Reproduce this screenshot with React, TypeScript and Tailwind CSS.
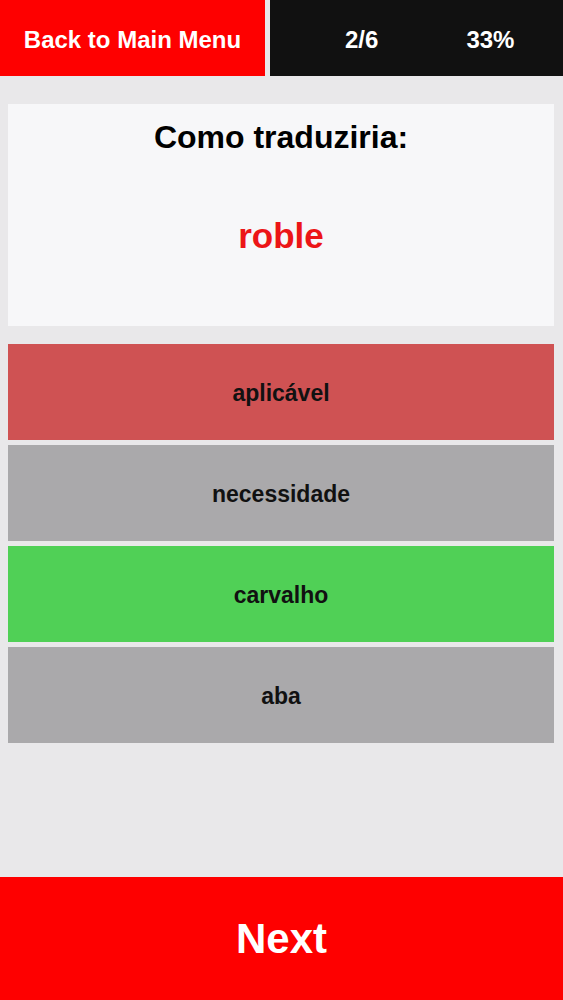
const options = [
  { label: "aplicável", tone: "bg-[#cf5253]" },
  { label: "necessidade", tone: "bg-[#aaa9ab]" },
  { label: "carvalho", tone: "bg-[#50d056]" },
  { label: "aba", tone: "bg-[#aaa9ab]" },
];

export default function App() {
  return (
    <div className="flex h-screen flex-col bg-[#e9e8ea] font-['Liberation_Sans',Arial,sans-serif]">
      <header className="flex h-[76px] shrink-0 bg-[#e9e8ea]">
        <button className="flex w-[265px] items-center justify-center bg-[#fe0000] pt-[3px] text-[24px] font-bold text-white">
          Back to Main Menu
        </button>
        <div className="ml-[5px] flex flex-1 items-center bg-[#111111] pl-[75px] pt-[3px] text-[24px] font-bold text-white">
          <span>2/6</span>
          <span className="ml-[88px]">33%</span>
        </div>
      </header>

      <main className="flex flex-1 flex-col pl-[8px] pr-[9px] pt-[28px]">
        <section className="flex h-[222px] flex-col items-center bg-[#f7f7f9] pt-[14px]">
          <h1 className="text-[32px] font-bold leading-[38px] text-black">Como traduziria:</h1>
          <p className="mt-[60px] text-[35px] font-bold leading-[40px] text-[#ec1517]">roble</p>
        </section>

        <div className="mt-[18px] flex flex-col gap-[5px]">
          {options.map((o) => (
            <button
              key={o.label}
              className={`flex h-[96px] items-center justify-center pt-[3px] text-[23px] font-bold text-[#111] ${o.tone}`}
            >
              {o.label}
            </button>
          ))}
        </div>
      </main>

      <button className="flex h-[123px] shrink-0 items-center justify-center bg-[#fe0000] text-[42px] font-bold text-white">
        Next
      </button>
    </div>
  );
}
